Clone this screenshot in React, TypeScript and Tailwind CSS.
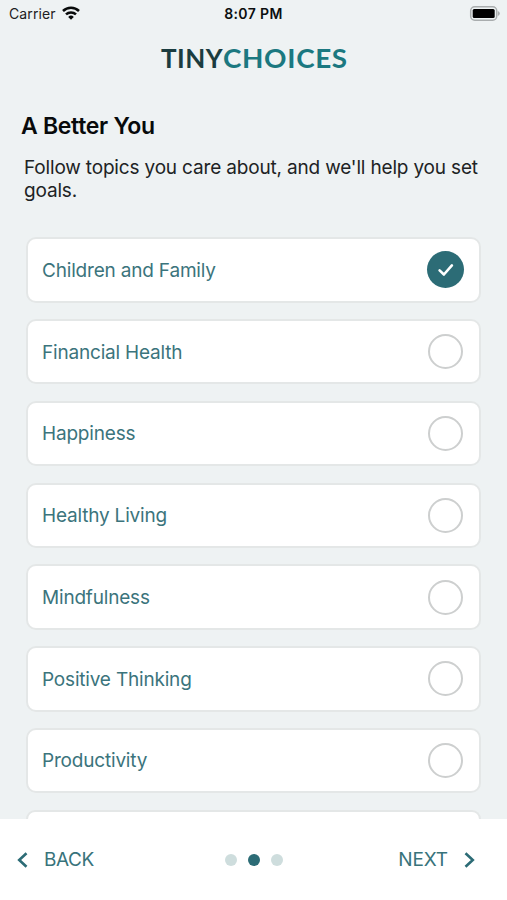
import React from "react";

const topics = [
  "Children and Family",
  "Financial Health",
  "Happiness",
  "Healthy Living",
  "Mindfulness",
  "Positive Thinking",
  "Productivity",
];

function StatusBar() {
  return (
    <div className="grid h-7 grid-cols-3 items-center pl-[9px] pr-[7px] text-[14px] leading-7 text-[#1d2022]">
      <div className="flex items-center gap-[6px]">
        <span className="tracking-[0.1px]">Carrier</span>
        <svg className="-mt-[2px]" width="18" height="14" viewBox="0 0 18 14" fill="none" stroke="#080a0a" strokeWidth="2.5">
          <path d="M1 5a11.4 11.4 0 0 1 16 0" />
          <path d="M4 8.4a7.2 7.2 0 0 1 10 0" />
          <path d="M9 13.8 6.2 10.9a4 4 0 0 1 5.6 0Z" fill="#080a0a" stroke="none" />
        </svg>
      </div>
      <div className="-ml-[2px] whitespace-nowrap text-center font-semibold tracking-[0.4px] text-[#0c0e0f]">8:07 PM</div>
      <svg className="-mt-[2px] justify-self-end" width="31" height="15" viewBox="0 0 31 15">
        <rect x="1.7" y="0.8" width="26" height="13.4" rx="4" fill="#eef3f4" stroke="#a9adae" strokeWidth="1.5" />
        <rect x="3.7" y="2.9" width="22" height="9.2" rx="1.5" fill="#000" />
        <path d="M28.8 5v5q2-.8 2-2.5T28.8 5Z" fill="#a9adae" />
      </svg>
    </div>
  );
}

function Radio({ checked }: { checked: boolean }) {
  if (!checked) {
    return <span className="mr-px size-[35px] rounded-full border-2 border-[#cdcfcf]" />;
  }
  return (
    <span className="flex size-[37px] items-center justify-center rounded-full bg-[#2c6c76]">
      <svg width="17" height="14" viewBox="0 0 17 14" fill="none" stroke="#fff" strokeWidth="2.6" strokeLinecap="round" strokeLinejoin="round">
        <path d="M2.6 7.4 6.9 11.5 14.9 2.4" />
      </svg>
    </span>
  );
}

function Topic({ label, checked }: { label: string; checked: boolean }) {
  return (
    <div className="flex h-[65.4px] shrink-0 items-center justify-between rounded-[10px] border-2 border-[#e4e7e7] bg-white pl-[14px] pr-[15px]">
      <span className="pt-[2px] text-[19px] tracking-[-0.19px] text-[#3b747c]">{label}</span>
      <Radio checked={checked} />
    </div>
  );
}

export default function App() {
  return (
    <div className="flex h-[900px] w-[507px] flex-col overflow-hidden bg-[#eef2f3] font-['Inter','Liberation_Sans',sans-serif]">
      <StatusBar />
      <div className="ml-[161px] mt-[12px] flex h-9 items-center font-['Lato',sans-serif] text-[26px] font-bold">
        <span className="w-[61.5px] tracking-[0.5px] text-[#1b3c3f]">TINY</span>
        <span className="origin-left scale-x-[1.07] tracking-[0.6px] text-[#1b7880]">CHOICES</span>
      </div>
      <h1 className="ml-[21px] mt-[35px] text-[23px] font-semibold leading-[30px] tracking-[-0.3px] text-[#080a0b]">A Better You</h1>
      <p className="ml-[24px] mt-[15px] whitespace-nowrap text-[19px] leading-[23px] tracking-[-0.17px] text-[#202324]">
        Follow topics you care about, and we'll help you set<br />goals.
      </p>
      <main className="mt-[35.3px] flex min-h-0 flex-1 flex-col gap-[16.4px] overflow-hidden px-[26px]">
        {topics.map((t, i) => (
          <Topic key={t} label={t} checked={i === 0} />
        ))}
        <div className="min-h-0 flex-1 rounded-t-[10px] border-2 border-b-0 border-[#e4e7e7] bg-white" />
      </main>
      <footer className="grid h-[81px] shrink-0 grid-cols-3 items-center bg-white pl-[17px] pr-[32px] text-[19px] text-[#38737b]">
        <button className="flex items-center gap-[16px]">
          <svg width="11" height="16" viewBox="0 0 11 16" fill="none" stroke="#2c6c76" strokeWidth="2.6">
            <path d="M9.5 1.2 2.2 8l7.3 6.8" />
          </svg>
          <span className="pt-[2px] tracking-[-0.4px]">BACK</span>
        </button>
        <div className="ml-[16px] flex items-center justify-center gap-[11.3px]">
          <i className="size-3 rounded-full bg-[#cedddd]" />
          <i className="size-3 rounded-full bg-[#2c6c76]" />
          <i className="size-3 rounded-full bg-[#cedddd]" />
        </div>
        <button className="flex items-center justify-end gap-[16px]">
          <span className="pt-[2px] tracking-[-0.1px]">NEXT</span>
          <svg width="11" height="16" viewBox="0 0 11 16" fill="none" stroke="#2c6c76" strokeWidth="2.6">
            <path d="m1.5 1.2 7.3 6.8-7.3 6.8" />
          </svg>
        </button>
      </footer>
    </div>
  );
}
